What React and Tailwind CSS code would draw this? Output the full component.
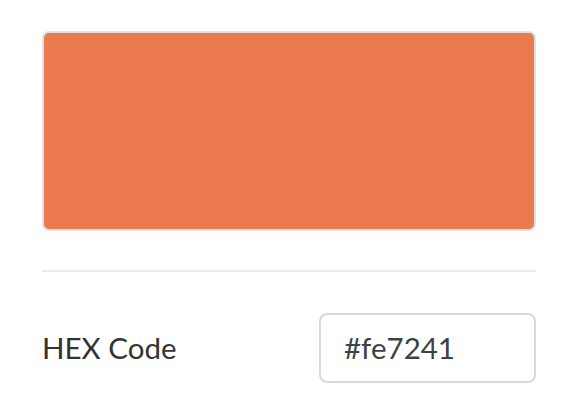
export default function App() {
  return (
    <div className="w-[562px] h-[410px] bg-white pl-[42px] pr-[26px] pt-[31px] font-['Lato','Liberation_Sans',sans-serif]">
      <div className="h-[200px] rounded-[7px] border-2 border-[#dde0e4] bg-[#ec7a4f]" />
      <div className="mt-[39px] h-[2px] bg-[#ececec]" />
      <div className="mt-[41px] flex items-center justify-between">
        <span className="text-[29.5px] text-[#333]">HEX Code</span>
        <div className="w-[217px] h-[70px] rounded-[8px] border-2 border-[#d6d9dd] flex items-center px-[23px] text-[29.5px] text-[#3d4246]">
          #fe7241
        </div>
      </div>
    </div>
  );
}
